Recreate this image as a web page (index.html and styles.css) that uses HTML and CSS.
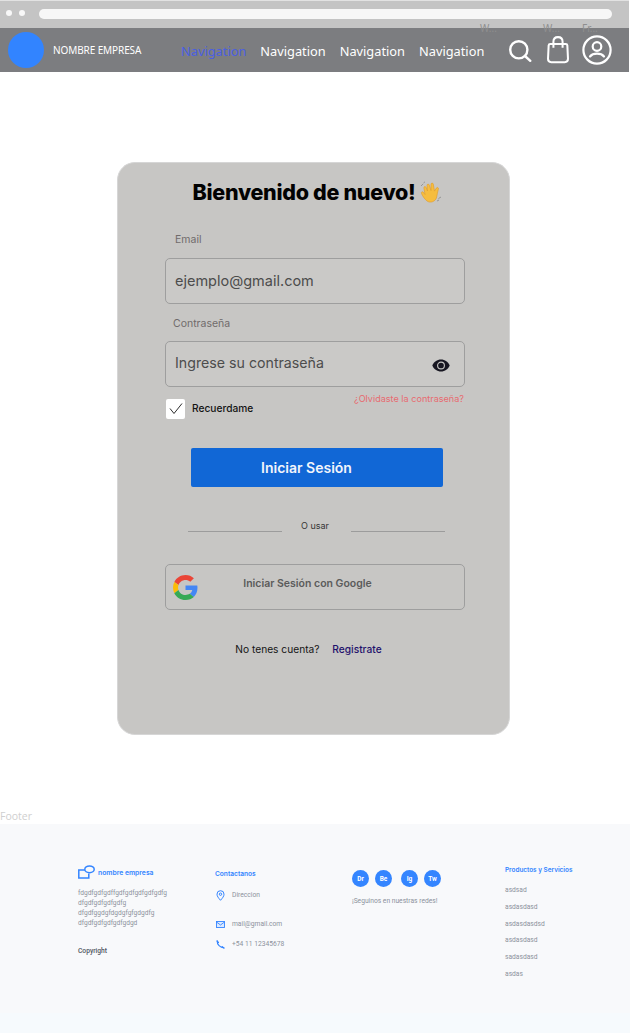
FILE: index.html
```html
<!DOCTYPE html>
<html lang="en">
<head>
    <meta charset="UTF-8">
    <meta name="viewport" content="width=device-width, initial-scale=1.0">
    <title>Iniciar Sesión</title>
    <link rel="stylesheet" href="styles.css">
</head>
<body>
    <div class="chrome">
        <span class="dot"></span>
        <span class="dot"></span>
        <div class="url-bar"></div>
        <span class="frame-label frame-a">W...</span>
        <span class="frame-label frame-b">W...</span>
        <span class="frame-label frame-c">Fr...</span>
    </div>

    <header class="topbar">
        <div class="brand">
            <div class="brand-circle"></div>
            <span class="brand-name">NOMBRE EMPRESA</span>
        </div>
        <nav class="nav">
            <a class="nav-active">Navigation</a>
            <a>Navigation</a>
            <a>Navigation</a>
            <a>Navigation</a>
        </nav>
        <div class="top-icons">
            <svg class="icon-search" width="23" height="22" viewBox="0 0 23 22" fill="none" stroke="#fff" stroke-width="2.4" stroke-linecap="round">
                <circle cx="9.800" cy="9.800" r="8.600"/>
                <path d="M16.500 16.500l4.800 4.300"/>
            </svg>
            <svg class="icon-bag" width="22" height="29" viewBox="0 0 24 30" fill="none" stroke="#fff" stroke-width="2.2" stroke-linejoin="round">
                <path d="M3.500 9h17c1 0 1.600.7 1.700 1.600l.7 14.600c0 2-1.400 3.600-3.500 3.600H4.600c-2.100 0-3.500-1.600-3.500-3.600l.7-14.600C1.900 9.700 2.500 9 3.500 9z"/>
                <path d="M7 13V6.500C7 3.500 9 1.500 12 1.500s5 2 5 5V13"/>
            </svg>
            <svg width="30" height="30" viewBox="0 0 30 30" fill="none" stroke="#fff" stroke-width="2.2" stroke-linecap="round">
                <circle cx="15" cy="15" r="13.600"/>
                <circle cx="15" cy="11.500" r="4.300"/>
                <path d="M8 21.500c1.500-1.900 4-2.800 7-2.800s5.500.9 7 2.800"/>
            </svg>
        </div>
    </header>

    <main class="card">
        <h1 class="card-title">Bienvenido de nuevo!
            <svg class="wave" width="23" height="22" viewBox="0 0 23 22">
                <path d="M7 20c-2.500-2-4.500-5-5.500-7.500-.6-1.500 1-2.300 1.900-1.200L5 13.500 3.900 7c-.3-1.500 1.600-2 2.200-.6L7.500 10 7 4.500c-.1-1.600 1.900-1.900 2.300-.4L11 9.500 11 3.300c0-1.500 2-1.700 2.300-.2l1.200 7 1.800-3c.8-1.300 2.500-.6 2.100.9-.8 2.800-1.200 5.500-1.700 8-.9 4.500-6.500 6.500-9.700 4z" fill="#f6bd3d" stroke="#e09a25" stroke-width=".6"/>
                <path d="M1 5l2-2M3.500 2L5 .8M18.500 17.500l2.500-1.500M17 20l2-1" stroke="#8f8f90" stroke-width=".9" fill="none"/>
            </svg>
        </h1>

        <label class="field-label label-email" for="email">Email</label>
        <div class="field">
            <input class="field-input" id="email" value="ejemplo@gmail.com">
        </div>

        <label class="field-label label-pass" for="pass">Contraseña</label>
        <div class="field field-pass">
            <input class="field-input" id="pass" value="Ingrese su contraseña">
            <svg class="eye" width="18" height="13" viewBox="0 0 18 13">
                <path d="M9 .5C5 .5 1.800 3 .3 6.500 1.800 10 5 12.500 9 12.500S16.200 10 17.700 6.500C16.200 3 13 .5 9 .5z" fill="#15141f"/>
                <circle cx="9" cy="6.500" r="3.400" fill="none" stroke="#c8c7c5" stroke-width="1.100"/>
                <circle cx="9" cy="6.500" r="1.800" fill="#15141f"/>
            </svg>
        </div>

        <div class="options">
            <label class="remember">
                <span class="checkbox">
                    <svg width="14" height="12" viewBox="0 0 14 12" fill="none" stroke="#2b2b2b" stroke-width="1">
                        <path d="M1 5.500l4 5L13 .5"/>
                    </svg>
                </span>
                <span class="remember-text">Recuerdame</span>
            </label>
            <a class="forgot">¿Olvidaste la contraseña?</a>
        </div>

        <button class="btn-login">Iniciar Sesión</button>

        <div class="divider">
            <span class="divider-line"></span>
            <span class="divider-text">O usar</span>
            <span class="divider-line"></span>
        </div>

        <button class="btn-google">
            <svg class="google-icon" width="25" height="25" viewBox="0 0 48 48">
                <path fill="#ea4335" d="M24 9.500c3.500 0 6.700 1.200 9.200 3.600l6.900-6.900C35.900 2.400 30.500 0 24 0 14.600 0 6.500 5.400 2.600 13.200l8 6.200C12.400 13.600 17.700 9.500 24 9.500z"/>
                <path fill="#4285f4" d="M47 24.500c0-1.600-.1-3.100-.4-4.500H24v9h13c-.6 3-2.300 5.500-4.800 7.200l7.700 6C44.400 37.900 47 31.800 47 24.500z"/>
                <path fill="#fbbc05" d="M10.500 28.600c-.5-1.400-.8-3-.8-4.600s.3-3.200.8-4.600l-8-6.200C.9 16.500 0 20.100 0 24s.9 7.500 2.600 10.800l7.900-6.200z"/>
                <path fill="#34a853" d="M24 48c6.500 0 11.900-2.100 15.900-5.800l-7.700-6c-2.200 1.400-4.900 2.300-8.200 2.300-6.300 0-11.600-4.200-13.500-9.900l-8 6.200C6.500 42.600 14.600 48 24 48z"/>
            </svg>
            Iniciar Sesión con Google
        </button>

        <p class="signup">No tenes cuenta? <a class="signup-link">Registrate</a></p>
    </main>

    <div class="footer-tag">Footer</div>

    <footer class="footer">
        <div class="footer-col">
            <div class="footer-logo">
                <svg width="17" height="14" viewBox="0 0 17 14" fill="none" stroke="#3284ff" stroke-width="1.500">
                    <path d="M8 5H.8v8h10V8.500"/>
                    <ellipse cx="11.500" cy="4.300" rx="4.700" ry="3.400" fill="#f8f9fb"/>
                </svg>
                <span class="footer-logo-name">nombre empresa</span>
            </div>
            <p class="footer-about">fdgdfgdfgdffgdfgdfgdfgdfgdfg<br>dfgdfgdfgdfgdfg<br>dfgdfggdgfdgdgfgfgdgdfg<br>dfgdfgdfgdfgdfgdgd</p>
            <p class="footer-copy">Copyright</p>
        </div>
        <div class="footer-col">
            <h3 class="footer-title contact-title">Contactanos</h3>
            <div class="contact-row row-address">
                <svg width="9" height="11" viewBox="0 0 9 11" fill="none" stroke="#3284ff" stroke-width="1">
                    <path d="M4.500 10.300C2.500 8 1 6.300 1 4.200a3.500 3.500 0 0 1 7 0c0 2.100-1.500 3.800-3.500 6.100z"/>
                    <circle cx="4.500" cy="4.200" r="1.200"/>
                </svg>
                <span>Direccion</span>
            </div>
            <div class="contact-row row-mail">
                <svg width="9" height="7" viewBox="0 0 9 7" fill="#dce9fe" stroke="#3284ff" stroke-width=".9">
                    <rect x=".5" y=".5" width="8" height="6"/>
                    <path d="M.5 1l4 3 4-3" fill="none"/>
                </svg>
                <span>mail@gmail.com</span>
            </div>
            <div class="contact-row row-phone">
                <svg width="9" height="9" viewBox="0 0 9 9" fill="none" stroke="#3284ff" stroke-width="1.100" stroke-linecap="round">
                    <path d="M1.200.8c-.4 3.500 3 7.200 7 7.200"/>
                    <path d="M1 1l1.500 1.500M6 6.500L7.800 8"/>
                </svg>
                <span>+54 11 12345678</span>
            </div>
        </div>
        <div class="footer-col">
            <div class="socials">
                <span class="social">Dr</span>
                <span class="social">Be</span>
                <span class="social social-gap">Ig</span>
                <span class="social">Tw</span>
            </div>
            <p class="social-text">¡Seguinos en nuestras redes!</p>
        </div>
        <div class="footer-col">
            <h3 class="footer-title products-title">Productos y Servicios</h3>
            <ul class="products">
                <li>asdsad</li>
                <li>asdasdasd</li>
                <li>asdasdasdsd</li>
                <li>asdasdasd</li>
                <li>sadasdasd</li>
                <li>asdas</li>
            </ul>
        </div>
    </footer>
    <div class="footer-bottom"></div>
</body>
</html>
```

FILE: styles.css
```css
* {
    box-sizing: border-box;
}
body {
    font-family: 'Inter', 'Liberation Sans', sans-serif;
    margin: 0;
    padding: 0;
    background: #fff;
    color: #000;
}

/* browser chrome */
.chrome {
    position: relative;
    display: flex;
    align-items: center;
    gap: 7px;
    height: 28px;
    margin-right: 1px;
    padding: 0 17px 0 6px;
    background: #c4c4c4;
    border-top: 1px solid #e2e2e2;
}
.dot {
    width: 6px;
    height: 6px;
    margin-top: -3px;
    border-radius: 50%;
    background: #f8f8f8;
}
.url-bar {
    flex: 1;
    height: 10px;
    margin-left: 7px;
    margin-top: -1px;
    border-radius: 5px;
    background: #f7f7f7;
}
.frame-label {
    position: absolute;
    top: 20px;
    font-family: 'Noto Sans', sans-serif;
    font-size: 10px;
    line-height: 14px;
    color: #8f8f8f;
}
.frame-a { left: 480px; }
.frame-b { left: 543px; }
.frame-c { left: 582px; }

/* top bar */
.topbar {
    display: flex;
    align-items: center;
    height: 44px;
    margin-right: 1px;
    padding: 0 18px 0 8px;
    background: #7c7d80;
    color: #fff;
    font-family: 'Noto Sans', sans-serif;
}
.brand {
    display: flex;
    flex: none;
    align-items: center;
    gap: 9px;
    width: 173px;
}
.brand-circle {
    width: 36px;
    height: 36px;
    border-radius: 50%;
    background: #3284ff;
}
.brand-name {
    font-size: 10px;
    letter-spacing: -0.1px;
}
.nav {
    display: flex;
    flex: none;
    gap: 14px;
    width: 328px;
    margin-top: 1px;
    font-size: 12.800px;
}
.nav-active {
    color: #4a5fe0;
}
.top-icons {
    display: flex;
    flex: none;
    align-items: center;
    gap: 13px;
}
.icon-search {
    margin-top: 1px;
}
.icon-bag {
    margin-left: 2px;
    margin-top: -1px;
}

/* login card */
.card {
    display: flex;
    flex-direction: column;
    align-items: flex-start;
    width: 393px;
    height: 573px;
    margin: 90px 0 0 117px;
    padding: 16px 45px 0 47px;
    background: #c7c6c4;
    border: 1px solid #d6d6d6;
    border-radius: 18px;
    opacity: 0.99;
}
.card-title {
    display: flex;
    align-items: center;
    justify-content: center;
    gap: 5px;
    align-self: center;
    height: 26px;
    margin: 0;
    padding-left: 7px;
    font-size: 21.500px;
    font-weight: 800;
    letter-spacing: -0.3px;
    white-space: nowrap;
}
.wave {
    flex: none;
}
.field-label {
    font-size: 10.500px;
    line-height: 14px;
    color: #6f6a6a;
}
.label-email {
    margin: 28px 0 0 10px;
}
.label-pass {
    margin: 13px 0 0 8px;
}
.field {
    position: relative;
    width: 300px;
    height: 46px;
    margin-top: 11px;
}
.field-pass {
    margin-top: 10px;
}
.field-input {
    width: 100%;
    height: 100%;
    padding: 0 9px 1px;
    background: #cac9c7;
    border: 1px solid #9d9d9d;
    border-radius: 5px;
    font-family: 'Inter', 'Liberation Sans', sans-serif;
    font-size: 14.500px;
    color: #4b4b4b;
}
#pass {
    padding-bottom: 3px;
    font-size: 14.200px;
}
.eye {
    position: absolute;
    top: 18px;
    right: 15px;
}
.options {
    display: flex;
    justify-content: space-between;
    width: 300px;
    height: 20px;
    margin-top: 12px;
}
.remember {
    display: flex;
    align-items: center;
    gap: 7px;
    padding-left: 1px;
    font-size: 10.200px;
    font-weight: 500;
    color: #111;
}
.remember-text {
    margin-top: -2px;
}
.checkbox {
    display: flex;
    align-items: center;
    justify-content: center;
    width: 19px;
    height: 20px;
    background: #fff;
    border-radius: 2px;
}
.forgot {
    font-size: 9.100px;
    line-height: 12px;
    margin: -6px 1px 0 0;
    color: #e8696f;
}
.btn-login {
    align-self: flex-start;
    width: 252px;
    height: 39px;
    margin: 29px 0 0 26px;
    padding: 0 21px 0 0;
    background: #0f66d6;
    border: none;
    border-radius: 2px;
    font-family: 'Inter', 'Liberation Sans', sans-serif;
    font-size: 14px;
    font-weight: 600;
    color: #f2f5fb;
}
.divider {
    display: flex;
    justify-content: space-between;
    width: 257px;
    height: 18px;
    margin: 35px 0 0 23px;
}
.divider-line {
    width: 94px;
    height: 1px;
    margin-top: 9px;
    background: #9b9b9b;
}
.divider-text {
    margin: -2px 3px 0 0;
    font-size: 9px;
    line-height: 12px;
    color: #333;
}
.btn-google {
    position: relative;
    width: 300px;
    height: 46px;
    margin-top: 24px;
    padding: 0 15px 7px 0;
    background: transparent;
    border: 1px solid #9d9d9d;
    border-radius: 5px;
    font-family: 'Inter', 'Liberation Sans', sans-serif;
    font-size: 10.500px;
    font-weight: 600;
    color: #5a5a5a;
}
.google-icon {
    position: absolute;
    left: 7px;
    top: 10px;
}
.signup {
    align-self: center;
    margin: 32px 12px 0 0;
    font-size: 10.200px;
    line-height: 14px;
    color: #111;
}
.signup-link {
    margin-left: 10px;
    font-weight: 500;
    color: #1d0f6b;
}

/* footer */
.footer-tag {
    height: 16px;
    margin-top: 73px;
    font-family: 'Open Sans', sans-serif;
    font-size: 10.500px;
    line-height: 16px;
    color: #cfcfcf;
}
.footer {
    display: grid;
    grid-template-columns: 137px 137px 153px 1fr;
    height: 189px;
    padding: 40px 0 0 78px;
    background: #f8f9fb;
    font-family: 'Roboto', sans-serif;
    font-size: 6.700px;
    color: #8c929c;
    opacity: 0.99;
}
.footer-col p {
    margin: 0;
}
.footer-logo {
    display: flex;
    align-items: center;
    gap: 3px;
    height: 14px;
    padding-top: 1px;
}
.footer-logo-name {
    margin-top: 1px;
    font-family: 'Inter', sans-serif;
    font-size: 6.800px;
    font-weight: 600;
    color: #3284ff;
}
.footer .footer-about {
    margin-top: 10px;
    font-size: 6.600px;
    line-height: 10.100px;
}
.footer .footer-copy {
    margin-top: 18px;
    line-height: 10px;
    font-weight: 500;
    color: #4f5561;
}
.footer-title {
    margin: 0;
    font-family: 'Inter', sans-serif;
    font-size: 6.600px;
    font-weight: 600;
    line-height: 10px;
    color: #3284ff;
}
.contact-title {
    margin-top: 5px;
}
.contact-row {
    display: flex;
    align-items: center;
    gap: 7px;
    height: 12px;
    padding-left: 1px;
}
.contact-row svg {
    width: 9px;
}
.row-address {
    margin-top: 10px;
}
.row-mail {
    margin-top: 17px;
}
.row-phone {
    margin-top: 8px;
}
.socials {
    display: flex;
    gap: 6px;
    margin-top: 6px;
}
.social {
    display: flex;
    align-items: center;
    justify-content: center;
    width: 17px;
    height: 17px;
    border-radius: 50%;
    background: #3284ff;
    font-size: 6.500px;
    font-weight: 700;
    color: #fff;
}
.social-gap {
    margin-left: 3px;
}
.footer .social-text {
    margin-top: 9px;
    line-height: 10px;
}
.products-title {
    margin-top: 1px;
    font-size: 6.400px;
}
.products {
    margin: 10px 0 0;
    padding: 0;
    list-style: none;
}
.products li {
    height: 16.750px;
    line-height: 10px;
}
.footer-bottom {
    height: 20px;
    background: #f6fafd;
}
```
